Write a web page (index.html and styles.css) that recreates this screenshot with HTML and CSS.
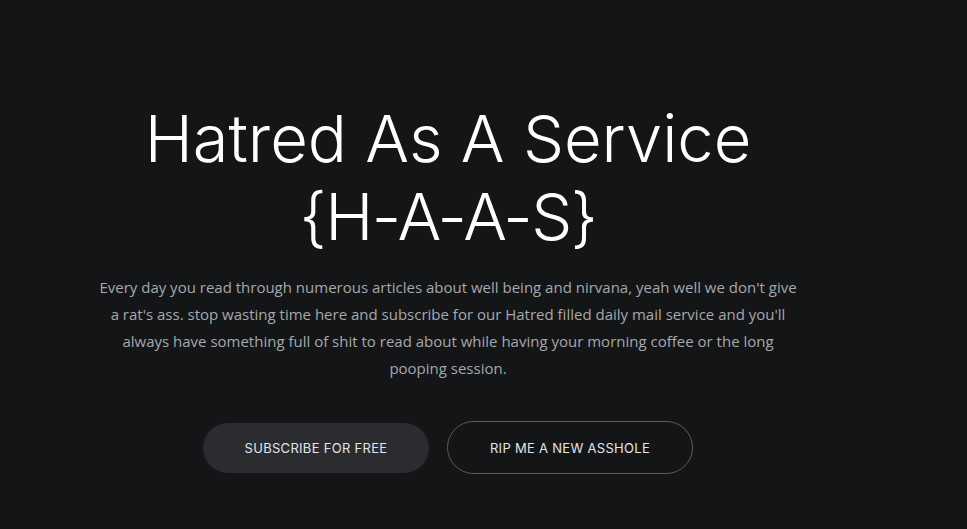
FILE: index.html
```html
<!DOCTYPE html>
<html lang="en">
<head>
    <meta charset="UTF-8">
    <meta name="viewport" content="width=device-width, initial-scale=1.0">
    <title>Hatred As A Service</title>
    <link rel="stylesheet" href="styles.css">
</head>
<body>
    <section class="hero">
        <div class="hero-inner">
            <h1 class="hero-title">Hatred As A Service<br><span class="hero-acronym">{H-A-A-S}</span></h1>
            <p class="hero-text">Every day you read through numerous articles about well being and nirvana, yeah well we don't give a rat's ass. stop wasting time here and subscribe for our Hatred filled daily mail service and you'll always have something full of shit to read about while having your morning coffee or the long pooping session.</p>
            <div class="hero-actions">
                <a href="#" class="btn btn-fill">Subscribe for free</a>
                <a href="#" class="btn btn-outline">Rip me a new asshole</a>
            </div>
        </div>
    </section>
</body>
</html>
```

FILE: styles.css
```css
:root {
    --bg-color: #141517;
    --title-color: #ffffff;
    --text-color: #a5a8ad;
    --btn-fill: #2b2c2f;
    --btn-border: #5a5b5e;
    --btn-text: #e2e4e8;
}

body {
    margin: 0;
    padding: 0;
    background-color: var(--bg-color);
    font-family: 'Open Sans', sans-serif;
}

.hero {
    width: 896px;
    padding-top: 100px;
}

.hero-inner {
    display: flex;
    flex-direction: column;
    align-items: center;
    text-align: center;
}

.hero-title {
    margin: 0;
    font-family: 'Inter', sans-serif;
    font-weight: 300;
    font-size: 65px;
    line-height: 78px;
    color: var(--title-color);
}

/* tighter dashes on the acronym line */
.hero-acronym {
    letter-spacing: -1.5px;
}

.hero-text {
    width: 702px;
    margin: 18px 0 0;
    font-size: 15px;
    line-height: 27px;
    color: var(--text-color);
}

.hero-actions {
    display: flex;
    align-items: center;
    gap: 18px;
    margin-top: 39px;
}

.btn {
    display: inline-flex;
    align-items: center;
    justify-content: center;
    box-sizing: border-box;
    border-radius: 30px;
    font-family: 'Inter', sans-serif;
    font-size: 13px;
    letter-spacing: 0.3px;
    text-transform: uppercase;
    text-decoration: none;
    color: var(--btn-text);
}

.btn-fill {
    width: 226px;
    height: 50px;
    background-color: var(--btn-fill);
}

.btn-outline {
    width: 246px;
    height: 53px;
    border: 1px solid var(--btn-border);
}
```
